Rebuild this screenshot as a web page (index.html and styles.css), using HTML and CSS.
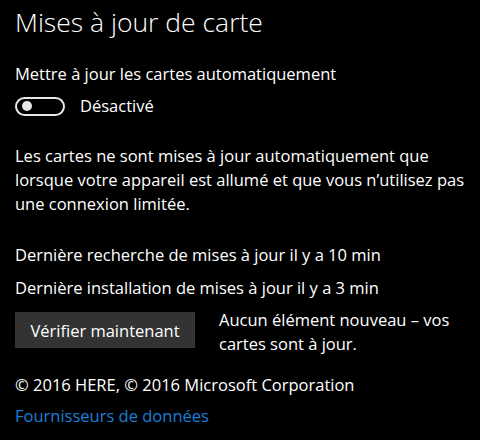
FILE: index.html
```html
<!DOCTYPE html>
<html lang="fr">
<head>
<meta charset="utf-8">
<link rel="stylesheet" href="styles.css">
</head>
<body>
<main class="page">
  <h1 class="title">Mises à jour de carte</h1>
  <div class="label">Mettre à jour les cartes automatiquement</div>
  <div class="toggle-row">
    <span class="toggle"><span class="knob"></span></span>
    <span class="toggle-text">Désactivé</span>
  </div>
  <p class="desc">Les cartes ne sont mises à jour automatiquement que lorsque votre appareil est allumé et que vous n’utilisez pas une connexion limitée.</p>
  <div class="status first">Dernière recherche de mises à jour il y a 10 min</div>
  <div class="status second">Dernière installation de mises à jour il y a 3 min</div>
  <div class="check-row">
    <button class="btn">Vérifier maintenant</button>
    <div class="check-text">Aucun élément nouveau – vos cartes sont à jour.</div>
  </div>
  <div class="copyright">© 2016 HERE, © 2016 Microsoft Corporation</div>
  <a class="link" href="#">Fournisseurs de données</a>
</main>
</body>
</html>
```
FILE: styles.css
```css
html, body {
  margin: 0;
  padding: 0;
  background: #000;
}
body {
  color: #fff;
  font-family: "Open Sans", "Noto Sans", sans-serif;
  font-size: 16.5px;
  line-height: 24px;
  width: 480px;
  height: 440px;
  overflow: hidden;
}
.page {
  display: flex;
  flex-direction: column;
  align-items: flex-start;
  padding: 0 12px 0 15px;
}
.title {
  margin: 5px 0 0;
  font-size: 26.5px;
  font-weight: 300;
  line-height: 34px;
}
.label {
  margin-top: 23px;
}
.toggle-row {
  display: flex;
  align-items: center;
  height: 24px;
  margin-top: 8px;
}
.toggle {
  box-sizing: border-box;
  width: 50px;
  height: 19px;
  border: 2px solid #e6e6e6;
  border-radius: 10px;
  display: flex;
  align-items: center;
  padding-left: 5px;
}
.knob {
  width: 10px;
  height: 10px;
  border-radius: 50%;
  background: #e6e6e6;
}
.toggle-text {
  margin-left: 15px;
}
.desc {
  margin: 26px 0 0;
}
.status.first {
  margin-top: 27px;
}
.status.second {
  margin-top: 9px;
}
.check-row {
  display: flex;
  align-items: flex-start;
  margin-top: 8px;
  gap: 24px;
}
.btn {
  margin-top: 4px;
  width: 180px;
  height: 36px;
  background: #333;
  color: #fff;
  border: none;
  font-family: inherit;
  font-size: 16.5px;
  padding: 0;
  flex-shrink: 0;
}
.check-text {
  flex: 1;
}
.copyright {
  margin-top: 17px;
}
.link {
  margin-top: 7px;
  color: #1a7fd9;
  text-decoration: none;
}
```
